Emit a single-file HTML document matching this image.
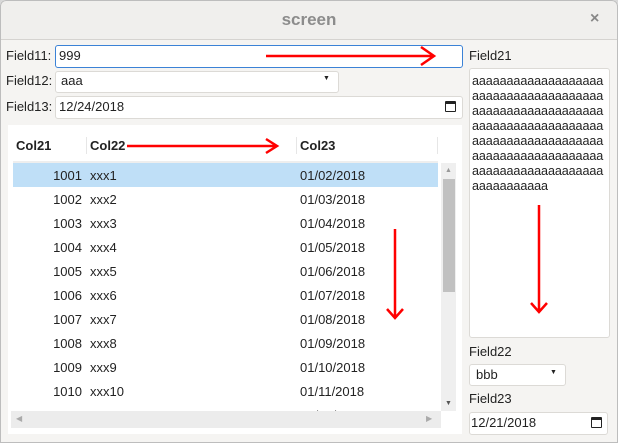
<!DOCTYPE html><html><head><style>
*{box-sizing:border-box;margin:0;padding:0}
body{width:618px;height:443px;background:#d8d8d8;font-family:"Liberation Sans","DejaVu Sans",sans-serif;font-size:13px;color:#222;position:relative;overflow:hidden}
.win{position:absolute;left:0;top:0;width:618px;height:443px;background:#f5f4f2;border-radius:6px 6px 0 0;overflow:hidden}
.brd{position:absolute;left:0;top:0;width:618px;height:443px;border:1px solid #bdbdbd;border-radius:6px 6px 0 0}
.tb{position:absolute;left:0;top:0;width:100%;height:40px;background:#f0efed;border-bottom:1px solid #d5d3d0}
.a{position:absolute;white-space:nowrap}
.box{position:absolute;background:#fff;border:1px solid #dcdad6;border-radius:3px}
</style></head><body><div class="win">
<div class="tb"></div>
<div class="a" style="left:0;width:618px;text-align:center;top:10px;font-size:17px;font-weight:bold;color:#8c8c8c">screen</div>
<div class="a" style="left:590px;top:10px;font-size:16px;font-weight:bold;color:#888">×</div>

<div class="a" style="left:6px;top:48px">Field11:</div>
<div class="box" style="left:55px;top:45px;width:408px;height:23px;border-color:#3b82d6"></div>
<div class="a" style="left:59px;top:48px">999</div>
<div class="a" style="left:6px;top:73px">Field12:</div>
<div class="box" style="left:55px;top:71px;width:284px;height:22px"></div>
<div class="a" style="left:61px;top:73px">aaa</div>
<div class="a" style="left:323px;top:75px;font-size:7px">▼</div>
<div class="a" style="left:6px;top:99px">Field13:</div>
<div class="box" style="left:55px;top:96px;width:408px;height:23px"></div>
<div class="a" style="left:59px;top:99px">12/24/2018</div>
<div class="a" style="left:445px;top:101px;width:11px;height:11px;border:1.5px solid #222;border-top-width:3px;border-radius:1px"></div>

<div class="a" style="left:8px;top:125px;width:454px;height:309px;background:#fff"></div>
<div class="a" style="left:16px;top:138px;font-weight:bold">Col21</div>
<div class="a" style="left:90px;top:138px;font-weight:bold">Col22</div>
<div class="a" style="left:300px;top:138px;font-weight:bold">Col23</div>
<div class="a" style="left:86px;top:137px;width:1px;height:17px;background:#e6e6e6"></div>
<div class="a" style="left:296px;top:137px;width:1px;height:17px;background:#e6e6e6"></div>
<div class="a" style="left:437px;top:137px;width:1px;height:17px;background:#e6e6e6"></div>
<div class="a" style="left:13px;top:161px;width:425px;height:2px;background:#eee"></div>
<div class="a" style="left:13px;top:163px;width:425px;height:24px;background:#bfdff7"></div>
<div id="rows"></div>
<div class="a" style="left:11px;top:411px;width:430px;height:17px;background:#ececec"></div>
<div class="a" style="left:16px;top:414px;font-size:8px;color:#aaa">◀</div>
<div class="a" style="left:426px;top:414px;font-size:8px;color:#aaa">▶</div>
<div class="a" style="left:441px;top:163px;width:15px;height:248px;background:#efefef"></div>
<div class="a" style="left:443px;top:179px;width:12px;height:113px;background:#c1c1c1"></div>
<div class="a" style="left:445px;top:167px;font-size:7px;color:#999">▲</div>
<div class="a" style="left:445px;top:400px;font-size:7px;color:#555">▼</div>

<div class="a" style="left:469px;top:48px">Field21</div>
<div class="box" style="left:469px;top:68px;width:141px;height:270px"></div>
<div class="a" style="left:472px;top:74px;font-size:12.6px;line-height:15px;letter-spacing:-0.1px">aaaaaaaaaaaaaaaaaaa<br>aaaaaaaaaaaaaaaaaaa<br>aaaaaaaaaaaaaaaaaaa<br>aaaaaaaaaaaaaaaaaaa<br>aaaaaaaaaaaaaaaaaaa<br>aaaaaaaaaaaaaaaaaaa<br>aaaaaaaaaaaaaaaaaaa<br>aaaaaaaaaaa</div>
<div class="a" style="left:469px;top:344px">Field22</div>
<div class="box" style="left:469px;top:364px;width:97px;height:22px"></div>
<div class="a" style="left:476px;top:367px">bbb</div>
<div class="a" style="left:550px;top:369px;font-size:7px">▼</div>
<div class="a" style="left:469px;top:391px">Field23</div>
<div class="box" style="left:469px;top:412px;width:139px;height:23px"></div>
<div class="a" style="left:471px;top:415px">12/21/2018</div>
<div class="a" style="left:591px;top:417px;width:11px;height:11px;border:1.5px solid #222;border-top-width:3px;border-radius:1px"></div>

<svg class="a" style="left:0;top:0" width="618" height="443"><g stroke="#f00" stroke-width="2.5" fill="none">
<path d="M266 56H434M421 47L434 56L421 65"/>
<path d="M127 146H277M266 139L277 146L266 153"/>
<path d="M395 229V318M387 309L395 318L403 309"/>
<path d="M539 205V312M531 303L539 312L547 303"/></g></svg>
<div class="brd"></div>
</div>
<script>
var h='';for(var i=0;i<12;i++){var y=168+i*24;var n=1001+i;var d=('0'+(i+2)).slice(-2);
h+='<div class="a" style="left:40px;width:42px;text-align:right;top:'+y+'px">'+n+'</div><div class="a" style="left:90px;top:'+y+'px">xxx'+(i+1)+'</div><div class="a" style="left:300px;top:'+y+'px">01/'+d+'/2018</div>';}
var r=document.getElementById('rows');r.outerHTML='<div class="a" style="left:0;top:0;width:440px;height:411px;overflow:hidden">'+h+'</div>';
</script>
</body></html>
